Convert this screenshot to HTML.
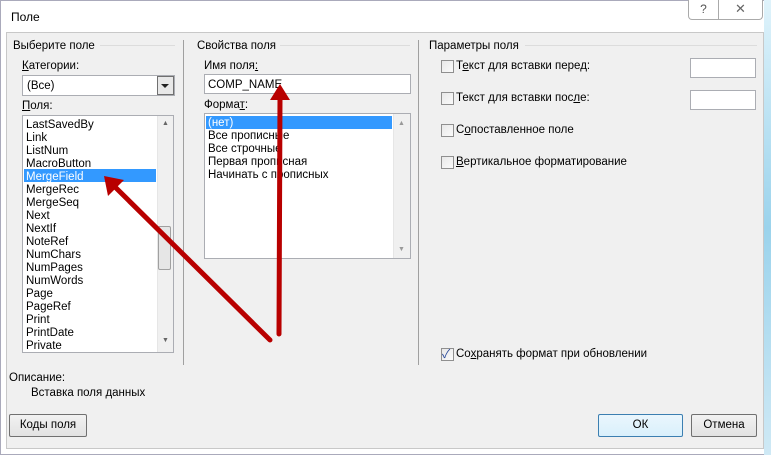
<!DOCTYPE html>
<html><head><meta charset="utf-8"><style>
*{margin:0;padding:0;box-sizing:border-box}
body{width:771px;height:455px;overflow:hidden;background:#fff;font-family:"Liberation Sans","Noto Sans CJK SC",sans-serif;font-size:11.5px;color:#000;position:relative}
.a{position:absolute;white-space:nowrap}
#frame{position:absolute;left:0;top:0;width:771px;height:455px;background:#fff;border:1px solid #aab}
#rb{position:absolute;left:764px;top:0;width:7px;height:455px;background:linear-gradient(#dff3fb,#9bd3ec,#cfe9f5)}
#body{position:absolute;left:6px;top:32px;width:758px;height:417px;background:#f0f0f0;border:1px solid #c8c8c8}
.hd{position:absolute;height:1px;background:#dcdcdc}
.vs{position:absolute;width:1px;background:#a0a0a0;top:40px;height:325px}
.box{position:absolute;background:#fff;border:1px solid #abadb3}
.sel{position:absolute;background:#3399ff;color:#fff}
.cb{position:absolute;width:13px;height:13px;border:1px solid #8f8f8f;background:linear-gradient(135deg,#e8e8e8,#fafafa)}
.btn{position:absolute;height:23px;border:1px solid #707070;background:linear-gradient(#f2f2f2,#e2e2e2);text-align:center;line-height:21px;border-radius:2px}
.sb{position:absolute;background:#f0f0f0;border-left:1px solid #e6e6e6}
u{text-decoration:underline}
</style></head><body>
<div id="frame"></div>
<div id="rb"></div>
<div class="a" style="left:11px;top:10px;font-size:12px">Поле</div>
<div style="position:absolute;left:688px;top:0;width:31px;height:20px;border:1px solid #aaa;border-top:none;border-radius:0 0 0 4px;background:#fff;text-align:center;font-size:12px;line-height:18px;color:#555">?</div>
<div style="position:absolute;left:719px;top:0;width:44px;height:20px;border:1px solid #aaa;border-top:none;border-left:none;border-radius:0 0 4px 0;background:#fff;text-align:center;font-size:13px;line-height:18px;color:#666">✕</div>
<div id="body"></div>

<div class="a" style="left:13px;top:40px">Выберите поле</div>
<div class="hd" style="left:100px;top:45px;width:75px"></div>
<div class="vs" style="left:183px"></div>
<div class="a" style="left:197px;top:40px">Свойства поля</div>
<div class="hd" style="left:280px;top:45px;width:130px"></div>
<div class="vs" style="left:418px"></div>
<div class="a" style="left:429px;top:40px">Параметры поля</div>
<div class="hd" style="left:525px;top:45px;width:232px"></div>

<div class="a" style="left:22px;top:60px"><u>К</u>атегории:</div>
<div class="box" style="left:22px;top:75px;width:153px;height:21px"></div>
<div class="a" style="left:27px;top:80px">(Все)</div>
<div style="position:absolute;left:157px;top:76px;width:17px;height:19px;border:1px solid #707070;background:#e8e8e8"></div>
<div style="position:absolute;left:161px;top:84px;width:0;height:0;border-left:4px solid transparent;border-right:4px solid transparent;border-top:4px solid #222"></div>
<div class="a" style="left:22px;top:100px"><u>П</u>оля:</div>
<div class="box" style="left:22px;top:115px;width:152px;height:238px"></div>
<div class="sb" style="left:157px;top:116px;width:16px;height:236px"></div>
<div style="position:absolute;left:158px;top:226px;width:13px;height:44px;border:1px solid #a0a0a0;border-radius:2px;background:#e6e6e6"></div>
<div class="a" style="left:162px;top:120px;font-size:7px;color:#666">▲</div>
<div class="a" style="left:162px;top:337px;font-size:7px;color:#666">▼</div>
<div class="sel" style="left:24px;top:169px;width:132px;height:13px"></div>
<div class="a" style="left:26px;top:119px;line-height:13px">LastSavedBy<br>Link<br>ListNum<br>MacroButton<br><span style="color:#fff">MergeField</span><br>MergeRec<br>MergeSeq<br>Next<br>NextIf<br>NoteRef<br>NumChars<br>NumPages<br>NumWords<br>Page<br>PageRef<br>Print<br>PrintDate<br>Private</div>

<div class="a" style="left:204px;top:60px">Имя поля<u>:</u></div>
<div class="box" style="left:204px;top:74px;width:207px;height:20px"></div>
<div class="a" style="left:208px;top:79px">COMP_NAME</div>
<div class="a" style="left:204px;top:99px">Форма<u>т</u>:</div>
<div class="box" style="left:204px;top:113px;width:207px;height:146px"></div>
<div class="sb" style="left:393px;top:114px;width:17px;height:144px"></div>
<div class="a" style="left:398px;top:120px;font-size:7px;color:#999">▲</div>
<div class="a" style="left:398px;top:246px;font-size:7px;color:#999">▼</div>
<div class="sel" style="left:206px;top:116px;width:186px;height:13px"></div>
<div class="a" style="left:208px;top:117px;line-height:13px"><span style="color:#fff">(нет)</span><br>Все прописные<br>Все строчные<br>Первая прописная<br>Начинать с прописных</div>

<div class="cb" style="left:441px;top:60px"></div><div class="a" style="left:456px;top:60px">Т<u>е</u>кст для вставки перед:</div>
<div class="box" style="left:690px;top:58px;width:66px;height:20px"></div>
<div class="cb" style="left:441px;top:92px"></div><div class="a" style="left:456px;top:92px">Текст для вставки пос<u>л</u>е:</div>
<div class="box" style="left:690px;top:90px;width:66px;height:20px"></div>
<div class="cb" style="left:441px;top:124px"></div><div class="a" style="left:456px;top:124px">С<u>о</u>поставленное поле</div>
<div class="cb" style="left:441px;top:156px"></div><div class="a" style="left:456px;top:156px"><u>В</u>ертикальное форматирование</div>
<div class="cb" style="left:441px;top:348px"></div><div class="a" style="left:442px;top:345px;color:#2a4a9a;font-size:12px">✓</div>
<div class="a" style="left:456px;top:348px">Со<u>х</u>ранять формат при обновлении</div>

<div class="a" style="left:9px;top:372px">Описание:</div>
<div class="a" style="left:31px;top:387px">Вставка поля данных</div>
<div class="btn" style="left:9px;top:414px;width:78px">Ко<u>д</u>ы поля</div>
<div class="btn" style="left:598px;top:414px;width:85px;border-color:#3c7fb1;background:linear-gradient(#eaf6fd,#d9f0fc)">ОК</div>
<div class="btn" style="left:691px;top:414px;width:66px">Отмена</div>

<svg style="position:absolute;left:0;top:0" width="771" height="455">
<line x1="270" y1="340" x2="112" y2="184" stroke="#b80000" stroke-width="5" stroke-linecap="round"/>
<polygon points="104,176 124,180 108,196" fill="#b80000"/>
<line x1="279" y1="334" x2="280" y2="98" stroke="#b80000" stroke-width="5" stroke-linecap="round"/>
<polygon points="280,84 270,100 290,100" fill="#b80000"/>
</svg>
</body></html>
